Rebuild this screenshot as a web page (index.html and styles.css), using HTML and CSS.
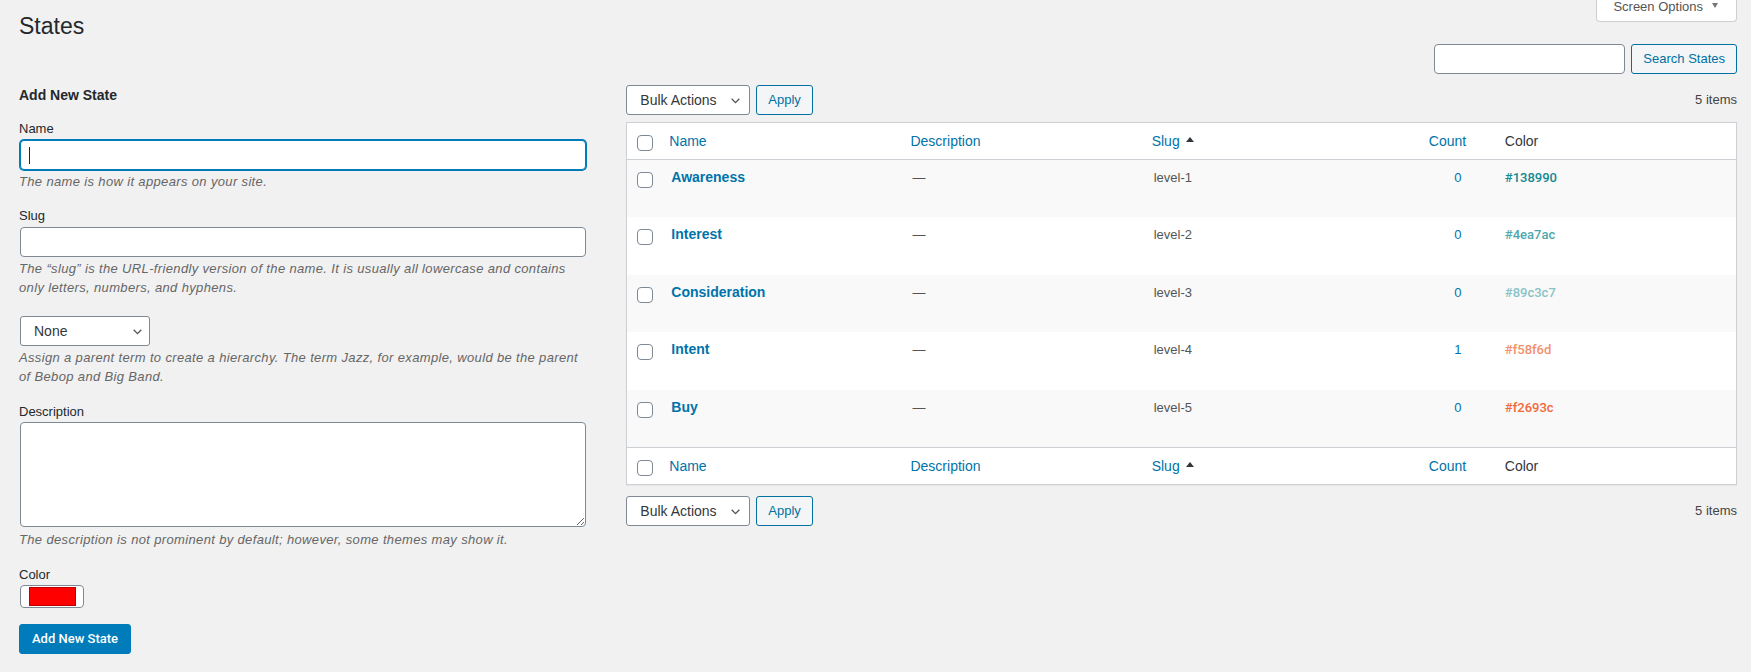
FILE: index.html
```html
<!DOCTYPE html>
<html lang="en">

<head>
    <meta charset="UTF-8">
    <meta name="viewport" content="width=device-width, initial-scale=1.0">
    <title>States</title>
    <link rel="stylesheet" href="styles.css">
</head>

<body>
    <div class="wrap">

        <div class="topbar">
            <h1>States</h1>
            <button class="screen-options" type="button">Screen Options<span class="tri-down"></span></button>
        </div>

        <form class="search-box">
            <input type="search" class="search-input">
            <button type="button" class="button">Search States</button>
        </form>

        <div class="col-container">

            <div class="col-left">
                <h2>Add New State</h2>
                <form class="add-form">
                    <div class="form-field">
                        <label for="tag-name">Name</label>
                        <div class="field-wrap">
                            <input type="text" id="tag-name" class="text focused">
                            <span class="caret"></span>
                        </div>
                        <p class="description">The name is how it appears on your site.</p>
                    </div>

                    <div class="form-field">
                        <label for="tag-slug">Slug</label>
                        <input type="text" id="tag-slug" class="text">
                        <p class="description">The &ldquo;slug&rdquo; is the URL-friendly version of the name. It is usually all lowercase and contains only letters, numbers, and hyphens.</p>
                    </div>

                    <div class="form-field">
                        <div class="select-wrap parent-select">
                            <select class="select">
                                <option>None</option>
                                <option>Awareness</option>
                                <option>Interest</option>
                                <option>Consideration</option>
                                <option>Intent</option>
                                <option>Buy</option>
                            </select>
                            <svg class="chevron" width="9" height="6" viewBox="0 0 9 6"><path d="M0.7 0.7 4.5 4.6 8.3 0.7" fill="none" stroke="#555" stroke-width="1.3"/></svg>
                        </div>
                        <p class="description">Assign a parent term to create a hierarchy. The term Jazz, for example, would be the parent of Bebop and Big Band.</p>
                    </div>

                    <div class="form-field">
                        <label for="tag-description">Description</label>
                        <textarea id="tag-description" class="textarea"></textarea>
                        <p class="description">The description is not prominent by default; however, some themes may show it.</p>
                    </div>

                    <div class="form-field">
                        <label for="tag-color">Color</label>
                        <input type="color" id="tag-color" class="color" value="#ff0000">
                    </div>

                    <p class="submit">
                        <button type="button" class="button button-primary">Add New State</button>
                    </p>
                </form>
            </div>

            <div class="col-right">

                <div class="tablenav top">
                    <div class="bulkactions">
                        <div class="select-wrap">
                            <select class="select bulk-select">
                                <option>Bulk Actions</option>
                                <option>Delete</option>
                            </select>
                            <svg class="chevron" width="9" height="6" viewBox="0 0 9 6"><path d="M0.7 0.7 4.5 4.6 8.3 0.7" fill="none" stroke="#555" stroke-width="1.3"/></svg>
                        </div>
                        <button type="button" class="button">Apply</button>
                    </div>
                    <span class="displaying-num">5 items</span>
                </div>

                <table class="wp-list-table">
                    <colgroup>
                        <col class="col-check">
                        <col>
                        <col>
                        <col class="col-slug">
                        <col class="col-count">
                        <col>
                    </colgroup>
                    <thead>
                        <tr>
                            <th class="check-column"><input type="checkbox"></th>
                            <th class="sortable"><a href="#">Name</a></th>
                            <th class="sortable"><a href="#">Description</a></th>
                            <th class="sortable"><a href="#">Slug<span class="sort-up"></span></a></th>
                            <th class="sortable"><a href="#">Count</a></th>
                            <th>Color</th>
                        </tr>
                    </thead>
                    <tbody>
                        <tr>
                            <th class="check-column"><input type="checkbox"></th>
                            <td><strong><a class="row-title" href="#">Awareness</a></strong></td>
                            <td>&mdash;</td>
                            <td>level-1</td>
                            <td class="num"><a href="#">0</a></td>
                            <td class="hex" style="color: #138990">#138990</td>
                        </tr>
                        <tr>
                            <th class="check-column"><input type="checkbox"></th>
                            <td><strong><a class="row-title" href="#">Interest</a></strong></td>
                            <td>&mdash;</td>
                            <td>level-2</td>
                            <td class="num"><a href="#">0</a></td>
                            <td class="hex" style="color: #4ea7ac">#4ea7ac</td>
                        </tr>
                        <tr>
                            <th class="check-column"><input type="checkbox"></th>
                            <td><strong><a class="row-title" href="#">Consideration</a></strong></td>
                            <td>&mdash;</td>
                            <td>level-3</td>
                            <td class="num"><a href="#">0</a></td>
                            <td class="hex" style="color: #89c3c7">#89c3c7</td>
                        </tr>
                        <tr>
                            <th class="check-column"><input type="checkbox"></th>
                            <td><strong><a class="row-title" href="#">Intent</a></strong></td>
                            <td>&mdash;</td>
                            <td>level-4</td>
                            <td class="num"><a href="#">1</a></td>
                            <td class="hex" style="color: #f58f6d">#f58f6d</td>
                        </tr>
                        <tr>
                            <th class="check-column"><input type="checkbox"></th>
                            <td><strong><a class="row-title" href="#">Buy</a></strong></td>
                            <td>&mdash;</td>
                            <td>level-5</td>
                            <td class="num"><a href="#">0</a></td>
                            <td class="hex" style="color: #f2693c">#f2693c</td>
                        </tr>
                    </tbody>
                    <tfoot>
                        <tr>
                            <th class="check-column"><input type="checkbox"></th>
                            <th class="sortable"><a href="#">Name</a></th>
                            <th class="sortable"><a href="#">Description</a></th>
                            <th class="sortable"><a href="#">Slug<span class="sort-up"></span></a></th>
                            <th class="sortable"><a href="#">Count</a></th>
                            <th>Color</th>
                        </tr>
                    </tfoot>
                </table>

                <div class="tablenav bottom">
                    <div class="bulkactions">
                        <div class="select-wrap">
                            <select class="select bulk-select">
                                <option>Bulk Actions</option>
                                <option>Delete</option>
                            </select>
                            <svg class="chevron" width="9" height="6" viewBox="0 0 9 6"><path d="M0.7 0.7 4.5 4.6 8.3 0.7" fill="none" stroke="#555" stroke-width="1.3"/></svg>
                        </div>
                        <button type="button" class="button">Apply</button>
                    </div>
                    <span class="displaying-num">5 items</span>
                </div>

            </div>
        </div>
    </div>
</body>

</html>
```

FILE: styles.css
```css
body {
    margin: 0;
    background: #f1f1f1;
    color: #444;
    font-family: "Liberation Sans", Arial, sans-serif;
    font-size: 13px;
    line-height: 1.5;
}

.wrap {
    padding: 0 14px 0 19px;
}

/* title + screen options tab */

.topbar {
    display: flex;
    justify-content: space-between;
    align-items: flex-start;
}

.topbar h1 {
    margin: 0;
    padding-top: 11px;
    font-size: 23px;
    font-weight: 400;
    line-height: 30px;
    color: #23282d;
}

.screen-options {
    margin-top: -6px;
    height: 28px;
    padding: 0 18px 2px 16px;
    border: 1px solid #ccd0d4;
    border-top: 0;
    border-radius: 0 0 4px 4px;
    background: #fff;
    color: #555;
    font-family: inherit;
    font-size: 13px;
    line-height: 22px;
}

.tri-down {
    display: inline-block;
    margin-left: 9px;
    vertical-align: 3px;
    border-left: 3px solid transparent;
    border-right: 3px solid transparent;
    border-top: 5px solid #72777c;
}

.search-box {
    display: flex;
    justify-content: flex-end;
    gap: 5px;
    margin-top: 3px;
}

.search-input {
    width: 191px;
}

/* shared controls */

input[type="text"],
input[type="search"],
textarea {
    box-sizing: border-box;
    height: 30px;
    margin: 0 1px;
    padding: 0 8px;
    border: 1px solid #7e8993;
    border-radius: 4px;
    background: #fff;
    color: #32373c;
    font-family: inherit;
    font-size: 14px;
}

.button {
    box-sizing: border-box;
    height: 30px;
    padding: 0 11px;
    border: 1px solid #0071a1;
    border-radius: 3px;
    background: #f3f5f6;
    color: #0071a1;
    font-family: inherit;
    font-size: 13px;
    line-height: 28px;
    cursor: pointer;
}

.button-primary {
    padding: 0 12px;
    border-color: #007cba;
    background: #007cba;
    color: #fff;
    font-family: Roboto, "Liberation Sans", sans-serif;
    font-weight: 500;
}

.select-wrap {
    position: relative;
    display: inline-block;
}

.select {
    -webkit-appearance: none;
    appearance: none;
    box-sizing: border-box;
    height: 30px;
    margin: 0 1px;
    padding: 0 28px 0 13px;
    border: 1px solid #7e8993;
    border-radius: 3px;
    background: #fff;
    color: #32373c;
    font-family: inherit;
    font-size: 14px;
    line-height: 28px;
}

.bulk-select {
    margin: 0;
    padding-right: 31px;
}

.chevron {
    position: absolute;
    right: 10px;
    top: 13px;
    pointer-events: none;
}

/* add new form */

.col-container {
    display: flex;
}

.col-left {
    box-sizing: border-box;
    flex: 0 0 35%;
    padding-right: 6px;
}

.col-right {
    box-sizing: border-box;
    flex: 1;
    padding-left: 6px;
}

.col-left h2 {
    margin: 12px 0 13px;
    font-size: 14px;
    font-weight: 700;
    line-height: 18px;
    color: #23282d;
}

.form-field {
    margin: 13px 0;
}

.form-field label {
    display: block;
    padding: 2px 0 1px;
    color: #23282d;
}

.form-field input.text {
    display: block;
    width: 95%;
}

.field-wrap {
    position: relative;
}

input.focused {
    border-color: #007cba;
    box-shadow: 0 0 0 1px #007cba;
    outline: none;
}

.caret {
    position: absolute;
    left: 10px;
    top: 7px;
    width: 1px;
    height: 17px;
    background: #23282d;
}

.parent-select {
    margin-top: 5px;
}

.parent-select .chevron {
    right: 9px;
}

.description {
    width: 95%;
    margin: 2px 0 5px;
    color: #666;
    font-style: italic;
    letter-spacing: 0.35px;
}

.textarea {
    display: block;
    width: 95%;
    height: 105px;
    margin-bottom: 3px;
    padding: 4px 8px;
}

input.color {
    -webkit-appearance: none;
    appearance: none;
    display: block;
    box-sizing: border-box;
    width: 64px;
    height: 23px;
    margin: 0 1px;
    padding: 1px 7px 1px 8px;
    border: 1px solid #7e8993;
    border-radius: 4px;
    background: #fff;
}

input.color::-webkit-color-swatch-wrapper {
    padding: 0;
}

input.color::-webkit-color-swatch {
    border: 1px solid rgba(0, 0, 0, 0.25);
    border-radius: 0;
}

.submit {
    margin: 16px 0 0;
}

/* list table */

.tablenav {
    display: flex;
    justify-content: space-between;
    align-items: center;
    height: 30px;
}

.tablenav.top {
    margin: 11px 0 7px;
}

.tablenav.bottom {
    margin-top: 11px;
}

.bulkactions {
    display: flex;
    gap: 6px;
}

.displaying-num {
    color: #444;
}

.wp-list-table {
    width: 100%;
    table-layout: fixed;
    border-spacing: 0;
    border: 1px solid #ccd0d4;
    background: #fff;
    box-shadow: 0 1px 1px rgba(0, 0, 0, 0.04);
}

.col-check {
    width: 34px;
}

.col-slug {
    width: 25%;
}

.col-count {
    width: 74px;
}

.wp-list-table th {
    padding: 9px 10px;
    font-size: 14px;
    font-weight: 400;
    line-height: 18px;
    text-align: left;
    vertical-align: top;
    color: #32373c;
}

.wp-list-table thead th {
    border-bottom: 1px solid #ccd0d4;
}

.wp-list-table tfoot th {
    border-top: 1px solid #ccd0d4;
}

.wp-list-table th.sortable {
    padding: 0;
}

.wp-list-table th.sortable a {
    display: block;
    padding: 9px 8px;
    color: #0073aa;
    text-decoration: none;
}

.sort-up {
    display: inline-block;
    margin-left: 6px;
    vertical-align: 4px;
    border-left: 4px solid transparent;
    border-right: 4px solid transparent;
    border-bottom: 5px solid #32373c;
}

.wp-list-table .check-column {
    padding: 12px 0 0 10px;
}

.wp-list-table input[type="checkbox"] {
    -webkit-appearance: none;
    appearance: none;
    display: block;
    width: 16px;
    height: 16px;
    margin: 0;
    border: 1px solid #7e8993;
    border-radius: 4px;
    background: #fff;
}

.wp-list-table tbody tr {
    height: 57.4px;
}

.wp-list-table tbody tr:nth-child(odd) {
    background: #f9f9f9;
}

.wp-list-table td {
    padding: 8px 10px;
    vertical-align: top;
    color: #555;
    line-height: 19.5px;
}

.row-title {
    font-size: 14px;
    font-weight: 700;
    color: #0073aa;
    text-decoration: none;
}

.wp-list-table td.num {
    text-align: center;
}

.wp-list-table td.num a {
    color: #0073aa;
    text-decoration: none;
}

.wp-list-table td.hex {
    font-family: Roboto, "Liberation Sans", sans-serif;
    font-weight: 500;
}
```
